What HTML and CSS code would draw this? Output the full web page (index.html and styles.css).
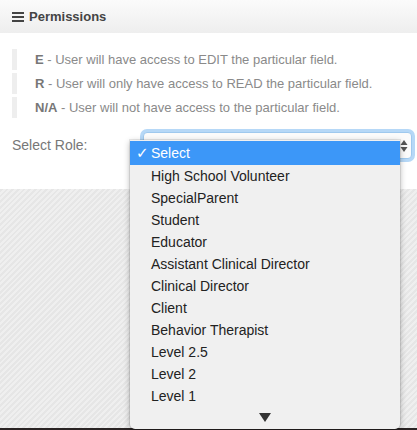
FILE: index.html
```html
<!DOCTYPE html>
<html>
<head>
<meta charset="utf-8">
<link rel="stylesheet" href="styles.css">
</head>
<body>
<div class="page">
  <div class="panel">
    <div class="panel-head">
      <svg class="bars" width="12" height="10" viewBox="0 0 12 10"><rect x="0" y="0" width="12" height="2"/><rect x="0" y="4" width="12" height="2"/><rect x="0" y="8" width="12" height="2"/></svg>
      <span>Permissions</span>
    </div>
    <div class="panel-body">
      <ul class="legend">
        <li><b>E</b> - User will have access to EDIT the particular field.</li>
        <li><b>R</b> - User will only have access to READ the particular field.</li>
        <li><b>N/A</b> - User will not have access to the particular field.</li>
      </ul>
      <div class="role-row">
        <label class="role-label">Select Role:</label>
        <div class="select-wrap">
          <div class="select-box">
            <svg class="updown" width="8" height="14" viewBox="0 0 8 14"><path d="M4 1 L7.5 6 L0.5 6 Z"/><path d="M4 13 L7.5 8 L0.5 8 Z"/></svg>
          </div>
          <ul class="dropdown">
            <li class="sel"><span class="check">✓</span>Select</li>
            <li>High School Volunteer</li>
            <li>SpecialParent</li>
            <li>Student</li>
            <li>Educator</li>
            <li>Assistant Clinical Director</li>
            <li>Clinical Director</li>
            <li>Client</li>
            <li>Behavior Therapist</li>
            <li>Level 2.5</li>
            <li>Level 2</li>
            <li>Level 1</li>
            <li class="more"><svg width="12" height="9" viewBox="0 0 12 9"><path d="M0 0 L12 0 L6 9 Z"/></svg></li>
          </ul>
        </div>
      </div>
    </div>
  </div>
  <div class="bottom-strip"></div>
</div>
</body>
</html>
```
FILE: styles.css
```css
* { box-sizing: border-box; }
html, body { margin: 0; padding: 0; }
body {
  font-family: "Liberation Sans", Arial, Helvetica, sans-serif;
  width: 417px;
  height: 430px;
  overflow: hidden;
  background: repeating-linear-gradient(135deg, #efefef 0px, #efefef 2px, #e6e6e6 2px, #e6e6e6 4px);
}
.page {
  position: relative;
  height: 430px;
  display: flex;
  flex-direction: column;
}
.panel {
  background: #fff;
  height: 189px;
}
.panel-head {
  height: 33px;
  background: linear-gradient(#fbfbfb, #eeeeee);
  display: flex;
  align-items: center;
  padding-left: 12px;
  gap: 5px;
  font-weight: bold;
  font-size: 13px;
  color: #444;
}
.bars { fill: #444; margin-top: 1px; }
.panel-body { padding: 16px 0 0 12px; }
.legend {
  list-style: none;
  margin: 0;
  padding: 0;
}
.legend li {
  border-left: 5px solid #eee;
  padding-left: 18px;
  height: 21px;
  line-height: 21px;
  margin-bottom: 3px;
  font-size: 13px;
  color: #8a8a8a;
}
.legend li:nth-child(n+2) { margin-top: 1px; }
.legend b { color: #777; }
.role-row {
  display: flex;
  align-items: flex-start;
  margin-top: 14px;
}
.role-label {
  font-size: 14px;
  color: #777;
  width: 131px;
  flex-shrink: 0;
  padding-top: 5px;
}
.select-wrap {
  position: relative;
  flex: 1;
}
.select-box {
  width: 269px;
  height: 27px;
  border: 1px solid #9fc9ee;
  border-radius: 4px;
  background: #fbfbfb;
  box-shadow: 0 0 0 3px #b6d8f7;
  display: flex;
  justify-content: flex-end;
  align-items: center;
  padding-right: 3px;
}
.updown { fill: #555; }
.dropdown {
  position: absolute;
  left: -13px;
  top: 8px;
  width: 270px;
  margin: 0;
  padding: 0;
  list-style: none;
  background: #f0f0f0;
  border-radius: 0 0 5px 5px;
  box-shadow: 0 2px 6px rgba(0,0,0,0.3), 0 0 0 1px rgba(0,0,0,0.08);
  padding-top: 1px;
  padding-bottom: 2px;
}
.dropdown li {
  height: 22px;
  line-height: 22px;
  font-size: 14px;
  color: #222;
  padding-left: 21px;
  position: relative;
}
.dropdown li.sel {
  background: #3c97f8;
  color: #fff;
  height: 24px;
  line-height: 24px;
}
.check {
  position: absolute;
  left: 6px;
  top: 0;
  font-family: "DejaVu Sans", sans-serif;
  font-size: 15px;
}
.dropdown li.more {
  height: 20px;
  padding-left: 0;
  display: flex;
  justify-content: center;
  align-items: center;
}
.more svg { fill: #333; }
.bottom-strip {
  margin-top: auto;
  height: 2px;
  background: #2a2424;
}
```
